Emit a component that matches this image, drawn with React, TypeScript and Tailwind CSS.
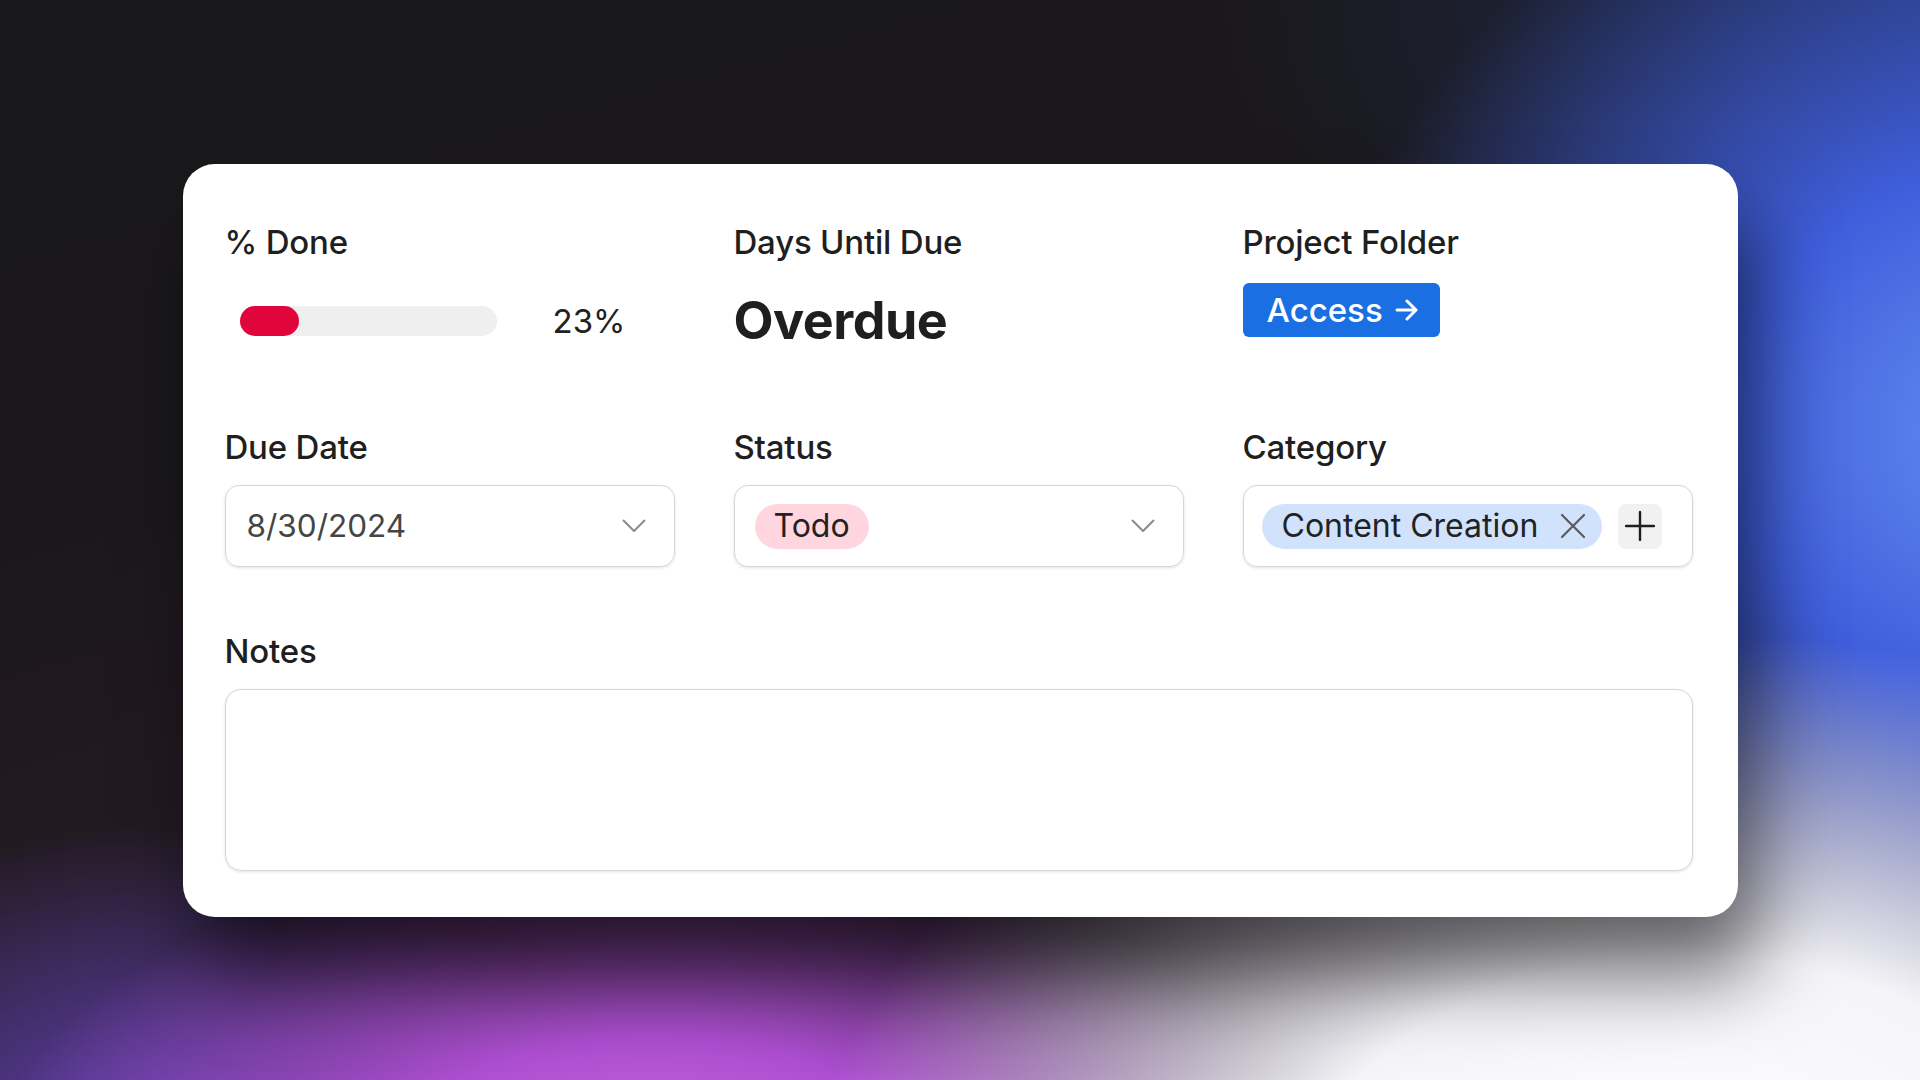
import React from "react";

const font = { fontFamily: "Inter, 'Noto Sans', sans-serif" };

function Chevron() {
  return (
    <svg width="24" height="14" viewBox="0 0 24 14" fill="none">
      <path d="M1.5 1.5 L12 12 L22.5 1.5" stroke="#8b8b8e" strokeWidth="2" strokeLinecap="round" strokeLinejoin="round" />
    </svg>
  );
}

function Label({ children }: { children: React.ReactNode }) {
  return <div className="h-[40px] text-[33px] leading-[40px] font-medium text-[#1f1f1f] tracking-[-0.2px] whitespace-nowrap">{children}</div>;
}

export default function App() {
  return (
    <div
      className="w-[1920px] h-[1080px] flex items-center justify-center overflow-hidden bg-[radial-gradient(ellipse_1100px_720px_at_88%_112%,#ffffff_0%,#f5f5f9_35%,rgba(240,240,248,0)_80%),radial-gradient(ellipse_660px_320px_at_34%_108%,#d06ae0_0%,#ac4ed0_40%,rgba(130,60,190,0)_100%),radial-gradient(ellipse_440px_320px_at_8%_106%,#5e40ae_0%,rgba(80,56,140,0)_100%),radial-gradient(ellipse_720px_640px_at_106%_40%,#6890f2_0%,#3f5edc_42%,rgba(50,70,190,0)_100%),radial-gradient(ellipse_700px_420px_at_100%_0%,#1f2a4e_0%,rgba(30,40,80,0)_100%),linear-gradient(165deg,#19181a_0%,#1b181c_35%,#241a22_58%,#33243a_82%,#3a2c48_100%)]"
      style={font}
    >
      <div className="w-[1555px] bg-white rounded-[32px] shadow-[20px_60px_80px_rgba(0,0,0,0.55)] pl-[42px] pr-[45px] pt-[58px] pb-[46px] mt-[1px]">
        <div className="grid grid-cols-3 gap-x-[59px]">
          {/* Row 1 */}
          <div>
            <Label>% Done</Label>
            <div className="mt-[20px] h-[78px] flex items-center">
              <div className="ml-[15px] w-[257px] h-[30px] rounded-full bg-[#efefef] shrink-0">
                <div className="w-[59px] h-[30px] rounded-full bg-[#e0063b]" />
              </div>
              <span className="ml-[56px] text-[33px] text-[#222] leading-none">23%</span>
            </div>
          </div>
          <div>
            <Label>Days Until Due</Label>
            <div className="mt-[20px] h-[78px] flex items-center">
              <span className="text-[52px] font-bold text-[#1f1f1f] leading-none tracking-[-0.5px]">Overdue</span>
            </div>
          </div>
          <div>
            <Label>Project Folder</Label>
            <div className="mt-[20px] h-[78px] flex items-start">
              <button className="mt-[1px] h-[54px] w-[197px] rounded-[6px] bg-[#1a6fe3] text-white flex items-center pl-[24px] gap-[12px]">
                <span className="text-[33px] font-medium leading-none">Access</span>
                <svg width="24" height="22" viewBox="0 0 24 22" fill="none">
                  <path d="M2 11 H21 M12 2 L21 11 L12 20" stroke="white" strokeWidth="3" strokeLinecap="round" strokeLinejoin="round" />
                </svg>
              </button>
            </div>
          </div>

          {/* Row 2 */}
          <div className="mt-[67px]">
            <Label>Due Date</Label>
            <div className="mt-[18px] h-[82px] rounded-[14px] border border-[#d6d6d6] shadow-[0_1px_3px_rgba(0,0,0,0.12)] flex items-center justify-between pl-[21px] pr-[28px]">
              <span className="text-[31.5px] text-[#454545] leading-none">8/30/2024</span>
              <Chevron />
            </div>
          </div>
          <div className="mt-[67px]">
            <Label>Status</Label>
            <div className="mt-[18px] h-[82px] rounded-[14px] border border-[#d6d6d6] shadow-[0_1px_3px_rgba(0,0,0,0.12)] flex items-center justify-between pl-[20px] pr-[28px]">
              <span className="h-[45px] px-[19px] rounded-full bg-[#ffd5df] flex items-center text-[32px] text-[#222] leading-none">Todo</span>
              <Chevron />
            </div>
          </div>
          <div className="mt-[67px]">
            <Label>Category</Label>
            <div className="mt-[18px] h-[82px] rounded-[14px] border border-[#d6d6d6] shadow-[0_1px_3px_rgba(0,0,0,0.12)] flex items-center pl-[18px]">
              <span className="h-[45px] w-[340px] pl-[20px] pr-[16px] rounded-full bg-[#d1e2fc] flex items-center justify-between text-[32px] text-[#222] leading-none whitespace-nowrap">
                <span>Content Creation</span>
                <svg width="26" height="26" viewBox="0 0 26 26" fill="none">
                  <path d="M2 2 L24 24 M24 2 L2 24" stroke="#5a5a5e" strokeWidth="2.2" strokeLinecap="round" />
                </svg>
              </span>
              <span className="ml-[16px] w-[44px] h-[45px] rounded-[8px] bg-[#f1f1f1] flex items-center justify-center">
                <svg width="30" height="30" viewBox="0 0 30 30" fill="none">
                  <path d="M15 1 V29 M1 15 H29" stroke="#1f1f1f" strokeWidth="2.4" strokeLinecap="round" />
                </svg>
              </span>
            </div>
          </div>

          {/* Row 3 */}
          <div className="col-span-3 mt-[64px]">
            <Label>Notes</Label>
            <div className="mt-[18px] h-[182px] rounded-[16px] border border-[#d6d6d6] shadow-[0_1px_3px_rgba(0,0,0,0.12)]" />
          </div>
        </div>
      </div>
    </div>
  );
}
